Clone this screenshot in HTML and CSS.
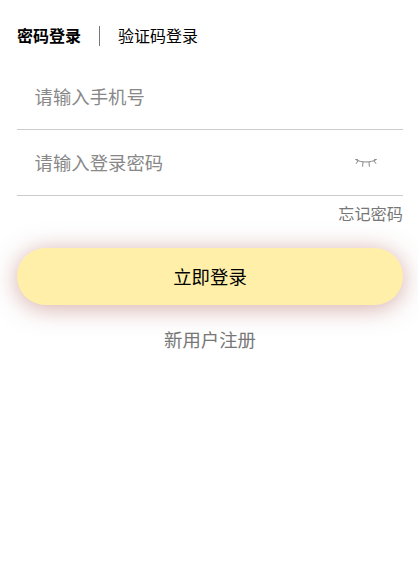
FILE: index.html
```
<!DOCTYPE html>
<html lang="zh-CN">
<head>
<meta charset="utf-8">
<title>登录</title>
<link rel="stylesheet" href="styles.css">
</head>
<body>
<main class="login">
  <nav class="tabs">
    <span class="tab tab-active">密码登录</span>
    <span class="tab-divider"></span>
    <span class="tab">验证码登录</span>
  </nav>
  <div class="field field-first"><span class="placeholder">请输入手机号</span></div>
  <div class="field field-second">
    <span class="placeholder">请输入登录密码</span>
    <svg class="eye" width="22" height="8" viewBox="0 0 22 8" fill="none" stroke="#888" stroke-width="1">
      <path d="M0.5 0.5 C6 3.8 16 3.8 21.5 0.5"/>
      <path d="M3 1.8 L1 4.8M8 3 L7.6 7.7M14 3 L14.4 7.7M19 1.8 L21 4.8M0.5 0.5 L3 0.3M21.5 0.5 L19 0.3"/>
    </svg>
  </div>
  <div class="forgot">忘记密码</div>
  <button class="submit" type="button">立即登录</button>
  <div class="register">新用户注册</div>
</main>
</body>
</html>
```
FILE: styles.css
```
* { box-sizing: border-box; }
html, body { margin: 0; background: #fff; }
body { font-family: "Noto Sans CJK SC", "Liberation Sans", sans-serif; }
.login { padding: 25px 15px 0 17px; display: flex; flex-direction: column; }
.tabs { display: flex; align-items: center; height: 21px; font-size: 16px; color: #000; }
.tab { line-height: 21px; }
.tab-active { font-weight: 700; }
.tab-divider { width: 1px; height: 20px; background: #777; margin: 0 18px; }
.field { display: flex; align-items: center; justify-content: space-between; border-bottom: 1px solid #ccc; padding: 0 26px 0 17.5px; }
.field-first { height: 84px; padding-top: 16px; }
.field-second { height: 66px; padding-bottom: 2px; }
.placeholder { font-size: 18.4px; color: #888; line-height: 24px; }
.eye { display: block; margin-top: 2px; }
.forgot { text-align: right; font-size: 16.2px; color: #777; line-height: 21px; margin-top: 7px; }
.submit { display: block; width: 100%; height: 57px; margin-top: 24px; border: 0; border-radius: 29px; background: #ffefa9; color: #000; font: inherit; font-size: 18.4px; box-shadow: 0 3px 24px rgba(170, 90, 80, 0.5); padding: 0 0 2px; }
.register { text-align: center; font-size: 18.4px; color: #777; line-height: 24px; margin-top: 22px; }
```
